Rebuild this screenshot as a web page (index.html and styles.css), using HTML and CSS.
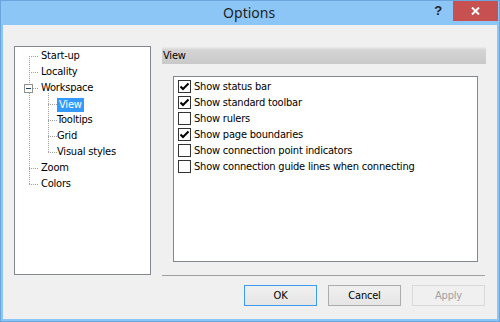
FILE: index.html
```html
<!DOCTYPE html>
<html lang="en">
<head>
    <meta charset="UTF-8">
    <title>Options</title>
    <link rel="stylesheet" href="styles.css">
</head>
<body>
    <div class="window">
        <div class="titlebar">
            <div class="title">Options</div>
            <div class="help">?</div>
            <div class="close">
                <svg width="9" height="8" viewBox="0 0 9 8">
                    <path d="M1 0.5 L8 7.5 M8 0.5 L1 7.5" stroke="#fff" stroke-width="2"/>
                </svg>
            </div>
        </div>
        <div class="client">
            <!-- Baum links -->
            <div class="tree">
                <svg class="tree-lines" width="135" height="227" viewBox="0 0 135 227">
                    <g stroke="#a0a0a0" stroke-width="1" stroke-dasharray="1 1" fill="none">
                        <path d="M14.5 9 V37 M14.5 46 V138"/>
                        <path d="M14 9.5 H24 M14 25.5 H24 M18 41.5 H24 M14 121.5 H24 M14 137.5 H24"/>
                        <path d="M33.5 46 V106"/>
                        <path d="M33 57.5 H43 M33 73.5 H43 M33 89.5 H43 M33 105.5 H43"/>
                    </g>
                    <rect x="9.5" y="37.5" width="8" height="8" fill="#fff" stroke="#919191"/>
                    <path d="M11 41.5 H16" stroke="#1c3f6e"/>
                </svg>
                <div class="node">Start-up</div>
                <div class="node">Locality</div>
                <div class="node">Workspace</div>
                <div class="node child"><span class="selected">View</span></div>
                <div class="node child">Tooltips</div>
                <div class="node child">Grid</div>
                <div class="node child">Visual styles</div>
                <div class="node">Zoom</div>
                <div class="node">Colors</div>
            </div>

            <div class="page">
                <div class="page-header">View</div>
                <div class="checklist">
                    <div class="check-row"><span class="box checked"></span>Show status bar</div>
                    <div class="check-row"><span class="box checked"></span>Show standard toolbar</div>
                    <div class="check-row"><span class="box"></span>Show rulers</div>
                    <div class="check-row"><span class="box checked"></span>Show page boundaries</div>
                    <div class="check-row"><span class="box"></span>Show connection point indicators</div>
                    <div class="check-row"><span class="box"></span>Show connection guide lines when connecting</div>
                </div>
                <div class="separator"></div>
                <div class="buttons">
                    <button class="btn default">OK</button>
                    <button class="btn">Cancel</button>
                    <button class="btn" disabled>Apply</button>
                </div>
            </div>
        </div>
    </div>
</body>
</html>
```

FILE: styles.css
```css
body {
    margin: 0;
    padding: 0;
    font-family: "DejaVu Sans Condensed", "Liberation Sans", Arial, sans-serif;
    font-size: 11px;
    letter-spacing: -0.2px;
    color: #000000;
}
.window {
    width: 500px;
    height: 322px;
    box-sizing: border-box;
    background-color: #8cc6f7;
    border: 1px solid #6aa6dd;
    padding: 0 2px 2px 2px;
    display: flex;
    flex-direction: column;
}
.titlebar {
    height: 24px;
    display: flex;
    align-items: flex-start;
}
.title {
    flex-grow: 1;
    text-align: center;
    font-family: "Noto Sans", sans-serif;
    font-size: 14px;
    letter-spacing: 0;
    line-height: 24px;
    color: #1e1e1e;
    padding-left: 61px;
}
.help {
    font-family: "Liberation Sans", sans-serif;
    font-weight: bold;
    font-size: 13px;
    line-height: 20px;
    color: #222222;
    margin-right: 11px;
}
.close {
    width: 45px;
    height: 20px;
    background-color: #c75050;
    display: flex;
    align-items: center;
    justify-content: center;
    margin-right: -1px;
}
.client {
    flex-grow: 1;
    background-color: #f0f0f0;
    display: flex;
    gap: 11px;
    padding: 21px 11px 0 11px;
}
.tree {
    width: 137px;
    height: 229px;
    box-sizing: border-box;
    border: 1px solid #828790;
    background-color: #ffffff;
    padding-top: 1px;
    position: relative;
}
.tree-lines {
    position: absolute;
    left: 0;
    top: 0;
}
.node {
    height: 16px;
    line-height: 16px;
    padding-left: 26px;
    display: flex;
}
.node.child {
    padding-left: 42px;
}
.node .selected {
    background-color: #3399ff;
    color: #ffffff;
    height: 14px;
    line-height: 14px;
    margin-top: 2px;
    padding: 0 2px;
}
.page {
    width: 324px;
    display: flex;
    flex-direction: column;
    padding-top: 1px;
}
.page-header {
    height: 17px;
    line-height: 17px;
    background: linear-gradient(#ececec 0, #d4d4d4 3px, #c9c9c9 100%);
    padding-left: 1px;
}
.checklist {
    margin: 12px 8px 0 11px;
    height: 186px;
    box-sizing: border-box;
    border: 1px solid #828790;
    background-color: #ffffff;
    padding: 3px 4px;
}
.check-row {
    height: 16px;
    line-height: 13px;
    display: flex;
    align-items: flex-start;
    gap: 3px;
}
.box {
    width: 13px;
    height: 13px;
    box-sizing: border-box;
    border: 1px solid #333333;
    background-color: #ffffff;
}
.box.checked {
    background-image: url("data:image/svg+xml;utf8,<svg xmlns='http://www.w3.org/2000/svg' width='11' height='11'><path d='M1.5 5.5 L4 8 L9.5 2.5' stroke='black' stroke-width='2' fill='none'/></svg>");
    background-repeat: no-repeat;
}
.separator {
    margin-top: 13px;
    height: 1px;
    margin-right: 1px;
    background-color: #a0a0a0;
}
.buttons {
    margin-top: 9px;
    display: flex;
    justify-content: flex-end;
    gap: 11px;
    padding-right: 1px;
}
.btn {
    width: 73px;
    height: 21px;
    box-sizing: border-box;
    border: 1px solid #acacac;
    background: linear-gradient(#f0f0f0, #e5e5e5);
    font-family: inherit;
    font-size: 11px;
    letter-spacing: -0.2px;
    color: #000000;
    padding: 0;
}
.btn.default {
    border-color: #3c9af0;
}
.btn:disabled {
    border-color: #d9d9d9;
    background: #f0f0f0;
    color: #a0a0a0;
}
```
